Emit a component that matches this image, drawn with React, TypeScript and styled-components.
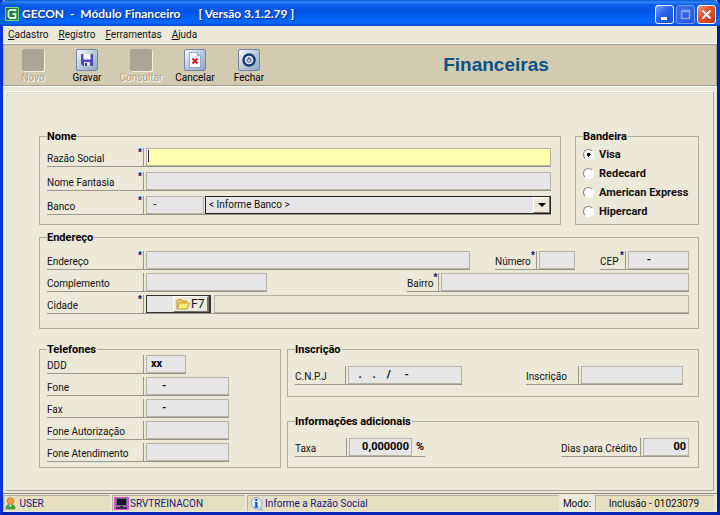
import React from "react";
import styled, { createGlobalStyle, css } from "styled-components";

const GlobalStyle = createGlobalStyle`
  *, *::before, *::after { box-sizing: border-box; }
  html, body { margin: 0; padding: 0; }
  body { background: #0a3fd0; font: 10px/12px Roboto, "Liberation Sans", sans-serif; color: #111; }
  button, input, select { font: inherit; color: inherit; margin: 0; }
`;

const Window = styled.div`
  display: flex;
  flex-direction: column;
  min-height: 100vh;
  border: solid #0831d9;
  border-width: 0 3px 3px;
  border-right-color: #001ea0;
  border-bottom-color: #0a22b4;
  background: #ece9d8;
`;

/* Title bar */

const TitleBar = styled.header`
  display: flex;
  align-items: center;
  height: 26px;
  margin: 0 -3px;
  padding: 2px 4px 0 5px;
  border-radius: 6px 6px 0 0;
  background: linear-gradient(#0a56d8 0, #2f86f5 2px, #0a5ae8 5px, #0355e5 12px, #0463fa 18px, #0568ff 23px, #0347c8 26px);
`;

const WindowTitle = styled.h1`
  display: flex;
  flex: 1;
  gap: 18px;
  margin: 0 0 0 3px;
  font: 700 12px/16px Lato, "Open Sans", sans-serif;
  color: #fff;
  white-space: pre;
  text-shadow: 1px 1px 1px #0a2a80;
`;

const Controls = styled.div`
  display: flex;
  gap: 2px;
`;

const ControlButton = styled.button<{ $tone: "plain" | "off" | "close" }>`
  display: grid;
  place-items: center;
  width: 19px;
  height: 19px;
  padding: 0;
  border: 1px solid ${(p) => (p.$tone === "off" ? "#6f9bf5" : "#fff")};
  border-radius: 3px;
  background: ${(p) =>
    p.$tone === "close"
      ? "linear-gradient(135deg, #f0a080, #e0512c 40%, #c83c14)"
      : p.$tone === "off"
      ? "linear-gradient(135deg, #3b72ea, #2453da)"
      : "linear-gradient(135deg, #7aa4fb, #2a5fe6 45%, #1c4fd8)"};
`;

/* Menu */

const MenuBar = styled.nav`
  display: flex;
  align-items: center;
  gap: 10px;
  height: 18px;
  padding: 0 5px;
  border-bottom: 1px solid #fff;
`;

const MenuLink = styled.a`
  color: #111;
  text-decoration: none;
`;

/* Toolbar */

const Toolbar = styled.div`
  display: flex;
  align-items: center;
  height: 42px;
  padding: 0 0 0 2px;
  border: 1px solid #a29c88;
  border-left-color: #b8b19a;
  background: #d3cbb1;
`;

const ToolButton = styled.button`
  display: flex;
  flex-direction: column;
  align-items: center;
  gap: 1px;
  width: 54px;
  padding: 2px 0 0;
  border: 0;
  background: none;
  color: #000;
  &:disabled {
    color: #aaa38e;
    text-shadow: 1px 1px 0 #fff;
  }
`;

const ToolFace = styled.span<{ $off?: boolean }>`
  display: grid;
  place-items: center;
  width: 22px;
  height: 22px;
  border: 1px solid #6f86a8;
  border-radius: 2px;
  background: linear-gradient(135deg, #f4f8fb, #b4c6d4 55%, #8fa8bc);
  ${(p) =>
    p.$off &&
    css`
      border-color: #aaa591;
      background: #aaa594;
      box-shadow: 1px 1px 0 #f4f1e2;
    `}
`;

const ScreenTitle = styled.h2`
  flex: 1;
  margin: 0;
  text-align: center;
  font: 700 19px/24px "Liberation Sans", Arial, sans-serif;
  color: #0b5181;
`;

/* Form */

const Main = styled.main`
  display: flex;
  flex: 1;
  flex-direction: column;
  padding: 4px 3px 2px 2px;
  border-top: 1px solid #fff;
`;

const Form = styled.form`
  flex: 1;
  padding: 39px 14px 0 33px;
  border: 1px solid #fff;
  border-right-color: #aca899;
  border-bottom-color: #aca899;
  box-shadow: inset 1px 1px 0 #dcd9c8;
`;

const TopRow = styled.div`
  display: grid;
  grid-template-columns: 1fr 124px;
  gap: 14px;
`;

const BottomRow = styled.div`
  display: grid;
  grid-template-columns: 242px 1fr;
  gap: 6px;
  margin-top: 15px;
`;

const Stack = styled.div`
  display: flex;
  flex-direction: column;
  justify-content: space-between;
`;

const Group = styled.fieldset<{ $top: number; $bottom: number; $gap?: number; $offset?: number }>`
  min-width: 0;
  margin: ${(p) => p.$offset ?? 0}px 0 0;
  padding: ${(p) => p.$top}px 9px ${(p) => p.$bottom}px 7px;
  border: 1px solid #b0ad9c;
  & > div + div {
    margin-top: ${(p) => p.$gap ?? 0}px;
  }
`;

const Legend = styled.legend`
  padding: 0 1px 0 0;
  font-weight: 700;
  font-size: 11px;
  line-height: 11px;
  color: #000;
`;

const Line = styled.div<{ $gap?: number; $split?: boolean; $inset?: number }>`
  display: flex;
  gap: ${(p) => p.$gap ?? 0}px;
  padding-right: ${(p) => p.$inset ?? 0}px;
  justify-content: ${(p) => (p.$split ? "space-between" : "flex-start")};
`;

const FieldBox = styled.div<{ $width?: number }>`
  display: flex;
  gap: 2px;
  height: 19px;
  min-width: 0;
  flex: ${(p) => (p.$width ? `0 0 ${p.$width}px` : "1 1 0")};
  border-bottom: 1px solid #98968a;
`;

const FieldLabel = styled.label<{ $width: number }>`
  display: flex;
  align-items: flex-end;
  justify-content: space-between;
  flex: 0 0 ${(p) => p.$width}px;
  padding-right: 1px;
  line-height: 14px;
  white-space: nowrap;
  border-right: 1px solid #98968a;
`;

const Star = styled.span`
  align-self: flex-start;
  font: 700 10px/9px "Liberation Sans", sans-serif;
  color: #10107c;
`;

const TextInput = styled.input<{ $width?: number; $tone?: "active" | "blank"; $right?: boolean; $regular?: boolean }>`
  flex: ${(p) => (p.$width ? `0 0 ${p.$width}px` : "1 1 0")};
  min-width: 0;
  height: 18px;
  padding: 0 ${(p) => (p.$right ? 2 : 4)}px 1px 4px;
  border: 1px solid #b4b3a4;
  border-radius: 0;
  outline: 0;
  background: #e6e6e6;
  color: #000;
  font-size: ${(p) => (p.$regular ? 10 : 11)}px;
  font-weight: ${(p) => (p.$regular ? 400 : 700)};
  text-align: ${(p) => (p.$right ? "right" : "left")};
  ${(p) =>
    p.$tone === "active" &&
    css`
      background: linear-gradient(#333, #333) 1px 1px / 1px 12px no-repeat #ffffb0;
      caret-color: transparent;
    `}
  ${(p) =>
    p.$tone === "blank" &&
    css`
      background: #ece9d8;
    `}
`;

const Unit = styled.span`
  padding-left: 2px;
  font-size: 11px;
  font-weight: 700;
  line-height: 17px;
`;

const BankPick = styled.span`
  display: flex;
  flex: 1;
  gap: 1px;
  min-width: 0;
`;

const SelectFrame = styled.span`
  display: grid;
  grid-template-columns: 1fr 17px;
  flex: 1;
  height: 18px;
  border: 1px solid #222;
  background: #e6e6e6;
`;

const Select = styled.select`
  grid-area: 1 / 1 / 2 / 3;
  min-width: 0;
  padding: 0 20px 0 3px;
  border: 0;
  outline: 0;
  appearance: none;
  background: none;
`;

const SelectArrow = styled.span`
  grid-area: 1 / 2;
  display: grid;
  place-items: center;
  pointer-events: none;
  border: 1px solid #fff;
  border-right-color: #77756a;
  border-bottom-color: #77756a;
  background: #ece9d8;
`;

const CityCode = styled.span`
  display: flex;
  flex: 0 0 65px;
  min-width: 0;
  height: 18px;
  margin-right: 1px;
  border: 1px solid #333;
  border-right-width: 2px;
  background: #fff;
`;

const CityInput = styled.input`
  flex: 1 1 0;
  width: 0;
  min-width: 0;
  padding: 0 2px;
  border: 0;
  outline: 0;
  background: #e6e6e6;
`;

const LookupButton = styled.button`
  display: flex;
  flex: 0 0 36px;
  align-items: center;
  gap: 1px;
  padding: 0 0 0 2px;
  border: 1px solid #fff;
  border-right: 2px solid #77756a;
  border-bottom-color: #77756a;
  background: #ece9d8;
  font-size: 12px;
`;

const RadioLabel = styled.label`
  display: flex;
  align-items: center;
  gap: 5px;
  height: 19px;
  font-size: 11px;
  font-weight: 700;
  white-space: nowrap;
`;

const Radio = styled.input`
  appearance: none;
  width: 11px;
  height: 11px;
  border: 1px solid #fff;
  border-top-color: #85837a;
  border-left-color: #85837a;
  border-radius: 50%;
  background: #fff;
  &:checked {
    background: radial-gradient(circle, #000 0 2px, #fff 2px);
  }
`;

/* Status bar */

const StatusBar = styled.footer`
  display: flex;
  gap: 2px;
  height: 19px;
  padding: 1px 3px 1px 0;
  border-top: 1px solid #8c897c;
`;

const StatusCell = styled.div<{ $width?: number; $plain?: boolean }>`
  display: flex;
  align-items: center;
  gap: 1px;
  flex: ${(p) => (p.$width ? `0 0 ${p.$width}px` : "1 1 0")};
  min-width: 0;
  padding-left: 1px;
  white-space: nowrap;
  border: solid #b5b09a;
  border-width: 1px 0 0 1px;
  background: #e6dfbf;
  color: #17177a;
  ${(p) =>
    p.$plain &&
    css`
      justify-content: center;
      padding: 0 2px 0 0;
      color: #111;
    `}
`;

const ModeCaption = styled.span`
  flex: 0 0 32px;
  padding-top: 1px;
  line-height: 16px;
  text-align: center;
`;

/* Icons */

const AppIcon = () => (
  <svg width="14" height="14" viewBox="0 0 14 14">
    <rect width="14" height="14" rx="1" fill="#7ed68a" />
    <rect x="1" y="1" width="12" height="12" fill="#1f7a3c" />
    <path d="M10.500 4.500V3H5L3.500 4.500v5L5 11h5.500V7H7.500" fill="none" stroke="#d8f5dc" strokeWidth="1.800" />
  </svg>
);

const DiskIcon = () => (
  <svg width="14" height="14" viewBox="0 0 14 14">
    <path d="M1 1h12v12H3L1 11z" fill="#4c4cb4" />
    <path d="M3.500 1h7v5.500h-7z" fill="#f5f6ff" />
    <path d="M4 9h6v4H4z" fill="#d8daf2" />
    <path d="M5 10h2v3H5z" fill="#35358e" />
  </svg>
);

const CancelIcon = () => (
  <svg width="16" height="18" viewBox="0 0 16 18">
    <path d="M2.500 1.500h8l3 3v12h-11z" fill="#f7fafe" stroke="#8fa9cc" />
    <path d="M10.500 1.500v3h3" fill="#cfdced" stroke="#8fa9cc" />
    <path d="M5.500 7.500l5 5M10.500 7.500l-5 5" stroke="#d8202a" strokeWidth="2.200" />
  </svg>
);

const PowerIcon = () => (
  <svg width="16" height="16" viewBox="0 0 16 16">
    <circle cx="8" cy="8" r="5.500" fill="#e3edf5" stroke="#173a6e" strokeWidth="2.400" />
    <path d="M6.500 6.600a2.100 2.100 0 1 0 3 0" fill="none" stroke="#173a6e" strokeWidth="1" />
    <path d="M8 5v3" stroke="#173a6e" strokeWidth="1.200" />
  </svg>
);

const FolderIcon = () => (
  <svg width="14" height="12" viewBox="0 0 14 12">
    <path d="M1 11V2.500L2 1.500h3l1 1.500h4.500V5" fill="#f3cf58" stroke="#bd9424" />
    <path d="M1 11l2.500-6h10L11 11z" fill="#ffea8a" stroke="#c79d2a" />
  </svg>
);

const UserIcon = () => (
  <svg width="11" height="13" viewBox="0 0 11 13">
    <path d="M1 12c-.4-3 1.200-4.500 4.500-4.500S10.400 9 10 12z" fill="#43a73c" stroke="#2a7a2a" strokeWidth=".6" />
    <path d="M4 7.500l1.500 2.500L7 7.500z" fill="#fff" />
    <circle cx="5.500" cy="4" r="3.300" fill="#f2a144" stroke="#b4691c" strokeWidth=".6" />
  </svg>
);

const ComputerIcon = () => (
  <svg width="15" height="13" viewBox="0 0 15 13">
    <rect width="15" height="13" fill="#cf55cf" />
    <path d="M2 1h11v8H2z" fill="#6d6d80" />
    <path d="M3 2h9v6H3z" fill="#14142c" />
    <path d="M6 9h3v1h4v2H2v-2h4z" fill="#33334c" />
  </svg>
);

const InfoIcon = () => (
  <svg width="15" height="14" viewBox="0 0 15 14">
    <path d="M7 .5a6 5.800 0 0 1 4.500 9.700l2 3-4-1.300A6 5.800 0 1 1 7 .5z" fill="#e4f1fd" stroke="#7fa6d0" />
    <path d="M7.300 5v5.500" stroke="#1b4fb4" strokeWidth="2.200" fill="none" />
    <path d="M5.800 5.500h2M5.500 10h3.800" stroke="#1b4fb4" strokeWidth="1" fill="none" />
    <circle cx="7.300" cy="2.900" r="1.200" fill="#1b4fb4" />
  </svg>
);

/* Composite parts */

type FieldProps = {
  id: string;
  label: string;
  labelWidth: number;
  width?: number;
  required?: boolean;
  children: React.ReactNode;
};

const Field = ({ id, label, labelWidth, width, required, children }: FieldProps) => (
  <FieldBox $width={width}>
    <FieldLabel htmlFor={id} $width={labelWidth}>
      {label}
      {required && <Star>*</Star>}
    </FieldLabel>
    {children}
  </FieldBox>
);

const menus = ["Cadastro", "Registro", "Ferramentas", "Ajuda"];

const tools = [
  { name: "Novo", icon: null },
  { name: "Gravar", icon: <DiskIcon /> },
  { name: "Consultar", icon: null },
  { name: "Cancelar", icon: <CancelIcon /> },
  { name: "Fechar", icon: <PowerIcon /> },
];

const cards = ["Visa", "Redecard", "American Express", "Hipercard"];

const phones = [
  { id: "ddd", label: "DDD", value: "xx", width: 139 },
  { id: "fone", label: "Fone", value: "    -", width: 182 },
  { id: "fax", label: "Fax", value: "    -", width: 182 },
  { id: "fone-aut", label: "Fone Autorização", value: "", width: 182 },
  { id: "fone-at", label: "Fone Atendimento", value: "", width: 182 },
];

export default function App() {
  return (
    <>
      <GlobalStyle />
      <Window>
        <TitleBar>
          <AppIcon />
          <WindowTitle>
            <span>{"GECON  -  Módulo Financeiro"}</span>
            <span>{"[ Versão 3.1.2.79 ]"}</span>
          </WindowTitle>
          <Controls>
            <ControlButton type="button" $tone="plain" aria-label="Minimizar">
              <svg width="13" height="13"><path d="M3 9h6v3H3z" fill="#fff" /></svg>
            </ControlButton>
            <ControlButton type="button" $tone="off" aria-label="Maximizar" disabled>
              <svg width="13" height="13"><path d="M2.500 3v7.500h8V2.500h-8M2 3.500h9" fill="none" stroke="#7fa5f5" strokeWidth="1.500" /></svg>
            </ControlButton>
            <ControlButton type="button" $tone="close" aria-label="Fechar janela">
              <svg width="13" height="13"><path d="M2.500 2.500l8 8M10.500 2.500l-8 8" stroke="#fff" strokeWidth="2" /></svg>
            </ControlButton>
          </Controls>
        </TitleBar>

        <MenuBar>
          {menus.map((m) => (
            <MenuLink key={m} href="#"><u>{m[0]}</u>{m.slice(1)}</MenuLink>
          ))}
        </MenuBar>

        <Toolbar>
          {tools.map((t) => (
            <ToolButton key={t.name} type="button" disabled={!t.icon}>
              <ToolFace $off={!t.icon}>{t.icon}</ToolFace>
              {t.name}
            </ToolButton>
          ))}
          <ScreenTitle>Financeiras</ScreenTitle>
        </Toolbar>

        <Main>
          <Form onSubmit={(e) => e.preventDefault()}>
            <TopRow>
              <Group $top={6} $bottom={9} $gap={5}>
                <Legend>Nome</Legend>
                <Field id="razao" label="Razão Social" labelWidth={97} required>
                  <TextInput id="razao" $tone="active" />
                </Field>
                <Field id="fantasia" label="Nome Fantasia" labelWidth={97} required>
                  <TextInput id="fantasia" />
                </Field>
                <Field id="banco" label="Banco" labelWidth={97} required>
                  <BankPick>
                    <TextInput id="banco" $width={58} $regular defaultValue=" -" />
                    <SelectFrame>
                      <Select aria-label="Banco">
                        <option>{"< Informe Banco >"}</option>
                      </Select>
                      <SelectArrow>
                        <svg width="8" height="4"><path d="M0 0h8L4 4z" fill="#000" /></svg>
                      </SelectArrow>
                    </SelectFrame>
                  </BankPick>
                </Field>
              </Group>
              <Group $top={3} $bottom={3}>
                <Legend>Bandeira</Legend>
                {cards.map((c, i) => (
                  <RadioLabel key={c}>
                    <Radio type="radio" name="bandeira" defaultChecked={i === 0} />
                    {c}
                  </RadioLabel>
                ))}
              </Group>
            </TopRow>

            <Group $top={8} $bottom={14} $gap={3} $offset={7}>
              <Legend>Endereço</Legend>
              <Line $gap={25}>
                <Field id="endereco" label="Endereço" labelWidth={97} required>
                  <TextInput id="endereco" />
                </Field>
                <Field id="numero" label="Número" labelWidth={42} width={80} required>
                  <TextInput id="numero" />
                </Field>
                <Field id="cep" label="CEP" labelWidth={26} width={89} required>
                  <TextInput id="cep" defaultValue="     -" />
                </Field>
              </Line>
              <Line $gap={140}>
                <Field id="complemento" label="Complemento" labelWidth={97} width={220}>
                  <TextInput id="complemento" />
                </Field>
                <Field id="bairro" label="Bairro" labelWidth={32} required>
                  <TextInput id="bairro" />
                </Field>
              </Line>
              <Line>
                <Field id="cidade" label="Cidade" labelWidth={97} required>
                  <CityCode>
                    <CityInput id="cidade" />
                    <LookupButton type="button"><FolderIcon />F7</LookupButton>
                  </CityCode>
                  <TextInput aria-label="Nome da cidade" $tone="blank" readOnly />
                </Field>
              </Line>
            </Group>

            <BottomRow>
              <Group $top={0} $bottom={5} $gap={3}>
                <Legend>Telefones</Legend>
                {phones.map((p) => (
                  <Line key={p.id}>
                    <Field id={p.id} label={p.label} labelWidth={97} width={p.width}>
                      <TextInput id={p.id} defaultValue={p.value} />
                    </Field>
                  </Line>
                ))}
              </Group>
              <Stack>
                <Group $top={11} $bottom={11}>
                  <Legend>Inscrição</Legend>
                  <Line $split $inset={6}>
                    <Field id="cnpj" label="C.N.P.J" labelWidth={51} width={167}>
                      <TextInput id="cnpj" defaultValue="  .    .    /     -" />
                    </Field>
                    <Field id="inscricao" label="Inscrição" labelWidth={53} width={157}>
                      <TextInput id="inscricao" />
                    </Field>
                  </Line>
                </Group>
                <Group $top={11} $bottom={10}>
                  <Legend>Informações adicionais</Legend>
                  <Line $split>
                    <Field id="taxa" label="Taxa" labelWidth={52} width={130}>
                      <TextInput id="taxa" $width={63} $right defaultValue="0,000000" />
                      <Unit>%</Unit>
                    </Field>
                    <Field id="dias" label="Dias para Crédito" labelWidth={80} width={128}>
                      <TextInput id="dias" $right defaultValue="00" />
                    </Field>
                  </Line>
                </Group>
              </Stack>
            </BottomRow>
          </Form>
        </Main>

        <StatusBar>
          <StatusCell $width={107}><UserIcon />&nbsp;USER</StatusCell>
          <StatusCell $width={133}><ComputerIcon />SRVTREINACON</StatusCell>
          <StatusCell><InfoIcon />Informe a Razão Social</StatusCell>
          <ModeCaption>Modo:</ModeCaption>
          <StatusCell $width={119} $plain>Inclusão - 01023079</StatusCell>
        </StatusBar>
      </Window>
    </>
  );
}
